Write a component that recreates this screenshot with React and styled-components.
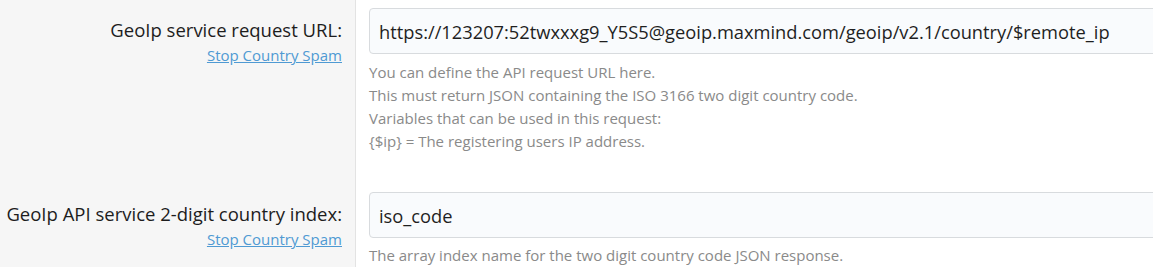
import React from "react";
import styled, { createGlobalStyle } from "styled-components";

const GlobalStyle = createGlobalStyle`
  html, body {
    margin: 0;
    padding: 0;
    background: #ffffff;
    overflow: hidden;
  }
  body {
    font-family: "Open Sans", "Noto Sans", "Liberation Sans", sans-serif;
  }
`;

const Table = styled.div`
  width: 1153px;
  height: 269px;
  overflow: hidden;
`;

const Row = styled.div`
  display: grid;
  grid-template-columns: 356px 1fr;
`;

const LabelCell = styled.div`
  background: #f6f6f6;
  border-right: 1px solid #e3e3e3;
  padding: 16px 13px 0 0;
  text-align: right;
`;

const Label = styled.label`
  display: block;
  font-size: 18.5px;
  line-height: 27px;
  color: #1d1d1d;
`;

const DocLink = styled.a`
  display: inline-block;
  margin-top: 2px;
  font-size: 15px;
  line-height: 20px;
  color: #4f9ad3;
  text-decoration: underline;
`;

const FieldCell = styled.div`
  padding: 8px 0 ${(p) => p.$bottom || 0}px 13px;
  min-width: 0;
`;

const Input = styled.input`
  display: block;
  box-sizing: border-box;
  width: 900px;
  height: 46px;
  padding: 0 9px;
  border: 1px solid #d8dbde;
  border-radius: 4px;
  background: #f9fbfd;
  font-family: "Open Sans", "Noto Sans", sans-serif;
  font-size: 18.3px;
  color: #1f1f1f;
  outline: none;
`;

const Help = styled.p`
  margin: ${(p) => p.$gap}px 0 0;
  font-size: 15px;
  line-height: 23px;
  color: #8a8a8a;
`;

const fields = [
  {
    label: "GeoIp service request URL:",
    value: "https://123207:52twxxxg9_Y5S5@geoip.maxmind.com/geoip/v2.1/country/$remote_ip",
    gap: 7,
    bottom: 31,
    help: [
      "You can define the API request URL here.",
      "This must return JSON containing the ISO 3166 two digit country code.",
      "Variables that can be used in this request:",
      "{$ip} = The registering users IP address.",
    ],
  },
  {
    label: "GeoIp API service 2-digit country index:",
    value: "iso_code",
    gap: 6,
    bottom: 0,
    help: ["The array index name for the two digit country code JSON response."],
  },
];

export default function App() {
  return (
    <>
      <GlobalStyle />
      <Table>
        {fields.map((f) => (
          <Row key={f.label}>
            <LabelCell>
              <Label>{f.label}</Label>
              <DocLink href="#">Stop Country Spam</DocLink>
            </LabelCell>
            <FieldCell $bottom={f.bottom}>
              <Input type="text" defaultValue={f.value} />
              <Help $gap={f.gap}>
                {f.help.map((line, i) => (
                  <React.Fragment key={i}>
                    {line}
                    {i < f.help.length - 1 && <br />}
                  </React.Fragment>
                ))}
              </Help>
            </FieldCell>
          </Row>
        ))}
      </Table>
    </>
  );
}
